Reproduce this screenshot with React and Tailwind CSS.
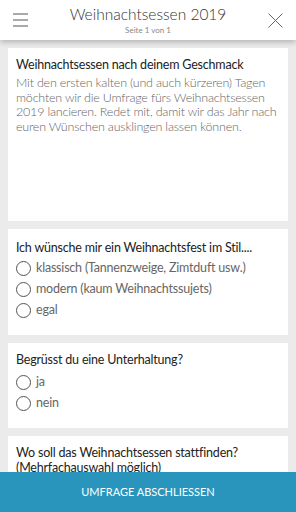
import React from 'react';

const Radio = ({ label }) => (
  <label className="flex items-center h-[21px] gap-[5px]">
    <span className="w-[15px] h-[15px] rounded-full border border-[#555] shrink-0"></span>
    <span className="text-[#666]">{label}</span>
  </label>
);

const Card = ({ children, className = '' }) => (
  <div className={`bg-white mx-2 px-2 ${className}`}>{children}</div>
);

const App = () => {
  return (
    <div className="h-[512px] bg-[#ebebeb] relative overflow-hidden text-[12.5px] tracking-[-0.2px] text-[#222]" style={{ fontFamily: 'Lato, sans-serif' }}>
      {/* Header */}
      <div className="h-10 bg-white shadow-[0_2px_6px_rgba(0,0,0,0.25)] relative z-10 flex items-center justify-between px-[13px]">
        <svg width="15" height="14" viewBox="0 0 15 14" className="text-[#555]">
          <path d="M0 1h15M0 7h15M0 13h15" stroke="currentColor" strokeWidth="1" />
        </svg>
        <div className="flex flex-col items-center leading-none pt-[1px] tracking-normal">
          <div className="text-[15.5px] text-[#333] font-light">Weihnachtsessen 2019</div>
          <div className="text-[8px] text-[#888] mt-[3px]">Seite 1 von 1</div>
        </div>
        <svg width="15" height="15" viewBox="0 0 15 15" className="text-[#666]">
          <path d="M0.5 0.5l14 14M14.5 0.5l-14 14" stroke="currentColor" strokeWidth="1" />
        </svg>
      </div>

      <div className="flex flex-col gap-2 pt-2">
        <Card className="h-[173px] pt-[9px]">
          <div className="leading-[15px]">Weihnachtsessen nach deinem Geschmack</div>
          <p className="text-[#666] font-light leading-[14.5px] mt-[4px]">
            Mit den ersten kalten (und auch kürzeren) Tagen möchten wir die Umfrage fürs Weihnachtsessen 2019 lancieren. Redet mit, damit wir das Jahr nach euren Wünschen ausklingen lassen können.
          </p>
        </Card>

        <Card className="h-[106px] pt-[11px]">
          <div className="leading-[15px] mb-[3px]">Ich wünsche mir ein Weihnachtsfest im Stil....</div>
          <Radio label="klassisch (Tannenzweige, Zimtduft usw.)" />
          <Radio label="modern (kaum Weihnachtssujets)" />
          <Radio label="egal" />
        </Card>

        <Card className="h-[85px] pt-[9px]">
          <div className="leading-[15px] mb-[5px]">Begrüsst du eine Unterhaltung?</div>
          <Radio label="ja" />
          <Radio label="nein" />
        </Card>

        <Card className="h-[80px] pt-[9px]">
          <div className="leading-[15px]">Wo soll das Weihnachtsessen stattfinden? (Mehrfachauswahl möglich)</div>
        </Card>
      </div>

      {/* Bottom button */}
      <div className="absolute left-0 right-0 bottom-0 h-10 bg-[#2a95bc] flex items-center justify-center text-white text-[11px] tracking-normal">
        UMFRAGE ABSCHLIESSEN
      </div>
    </div>
  );
};

export default App;
